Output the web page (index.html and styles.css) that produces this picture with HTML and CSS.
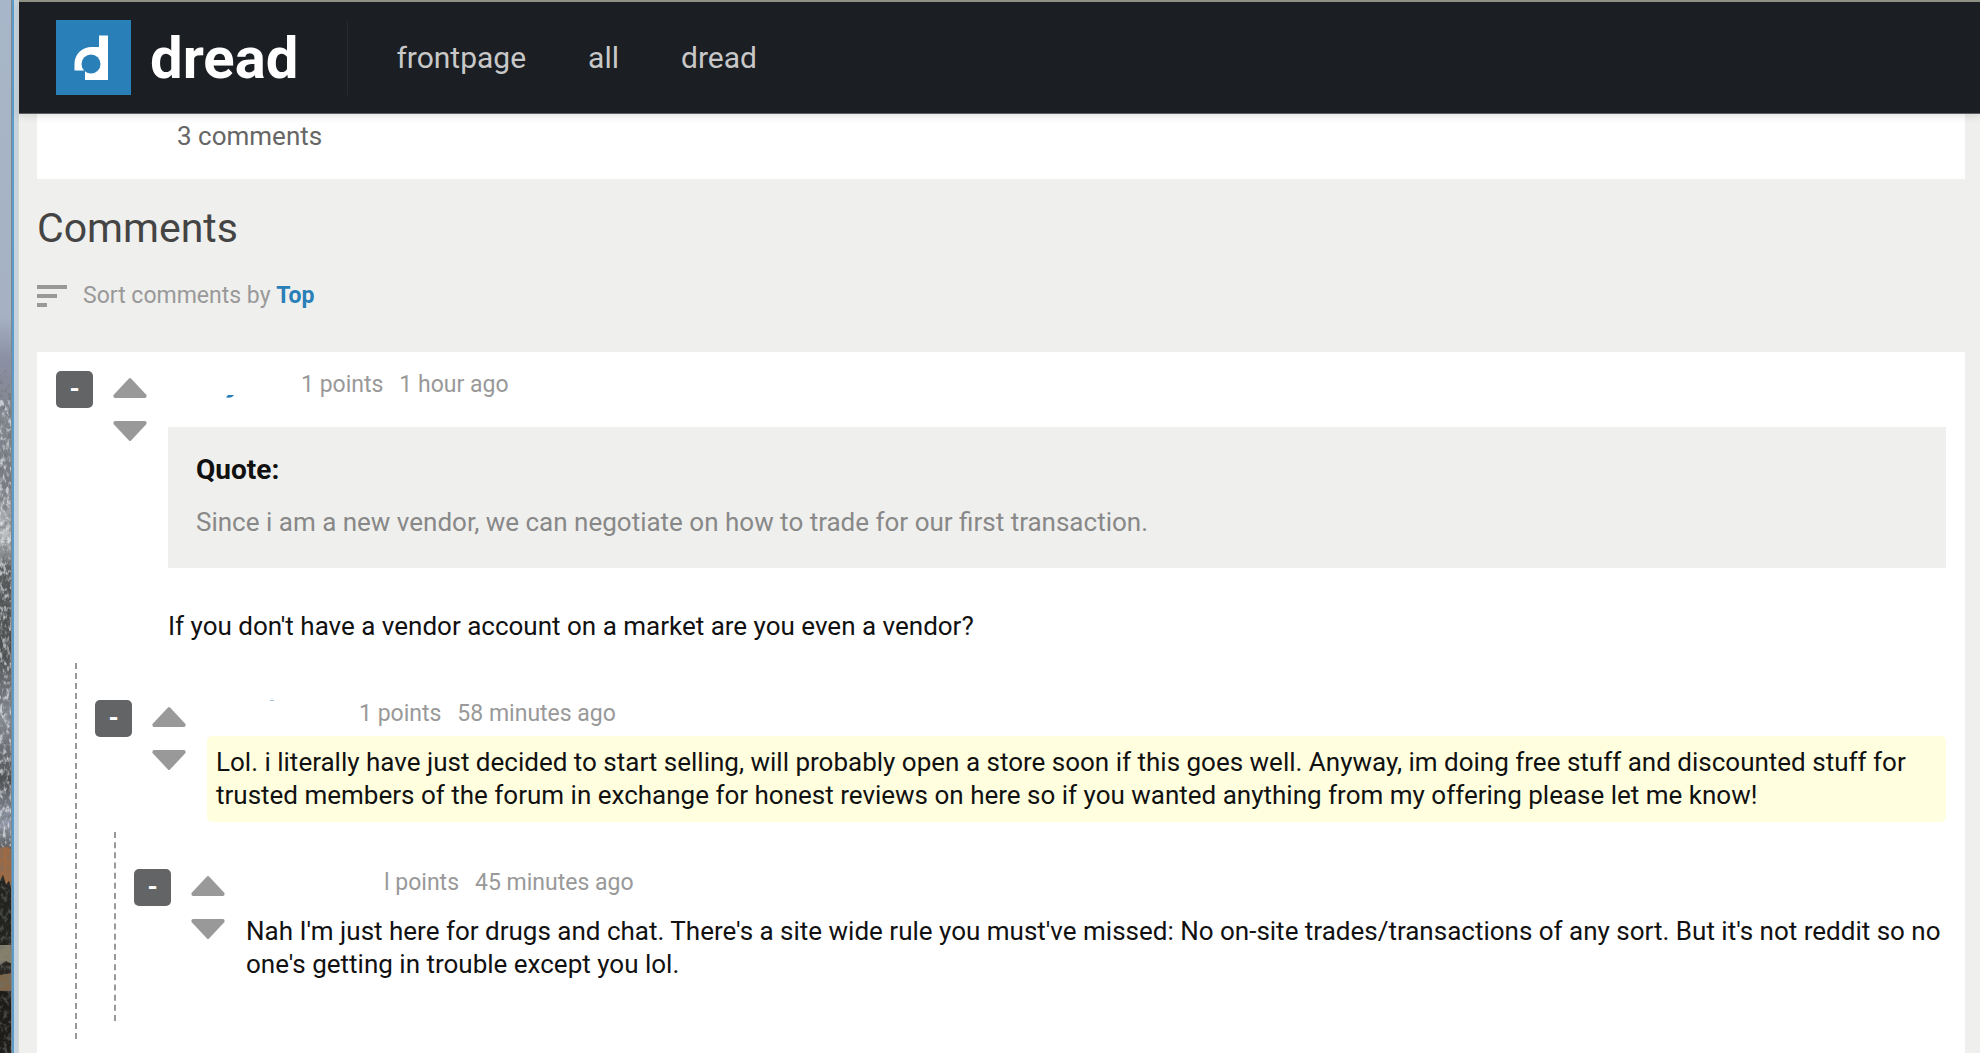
FILE: index.html
```html
<!DOCTYPE html>
<html lang="en">
<head>
<meta charset="utf-8">
<title>dread - comments</title>
<link rel="stylesheet" href="styles.css">
</head>
<body>
<div class="desktop">
  <svg class="wallpaper" viewBox="0 0 12 1053" preserveAspectRatio="none" aria-hidden="true">
    <defs>
      <linearGradient id="scene" x1="0" y1="0" x2="0" y2="1">
        <stop offset="0" stop-color="#a7b6c8"/>
        <stop offset=".3" stop-color="#a6b2c4"/>
        <stop offset=".34" stop-color="#8b90a4"/>
        <stop offset=".4" stop-color="#81868f"/>
        <stop offset=".46" stop-color="#7a7d84"/>
        <stop offset=".51" stop-color="#c0c4c6"/>
        <stop offset=".54" stop-color="#565a5b"/>
        <stop offset=".62" stop-color="#4b4e4e"/>
        <stop offset=".68" stop-color="#8a8e98"/>
        <stop offset=".74" stop-color="#4e5052"/>
        <stop offset=".78" stop-color="#949cac"/>
        <stop offset=".805" stop-color="#5d5e60"/>
      </linearGradient>
      <filter id="rock" x="0" y="0" width="1" height="1">
        <feTurbulence type="fractalNoise" baseFrequency=".3 .16" numOctaves="3" seed="7"/>
        <feColorMatrix values="0 0 0 0 .8  0 0 0 0 .82  0 0 0 0 .86  4 0 0 0 -1.9"/>
      </filter>
      <filter id="shade" x="0" y="0" width="1" height="1">
        <feTurbulence type="fractalNoise" baseFrequency=".25 .2" numOctaves="3" seed="21"/>
        <feColorMatrix values="0 0 0 0 .15  0 0 0 0 .16  0 0 0 0 .16  0 4 0 0 -1.9"/>
      </filter>
    </defs>
    <rect width="12" height="1053" fill="url(#scene)"/>
    <rect y="400" width="12" height="450" filter="url(#rock)" opacity=".7"/>
    <path d="M0 847L8 846L12 850V886L6 888L0 884Z" fill="#9c6a44"/>
    <path d="M0 880L3 874L6 884L9 880L12 890V946H0Z" fill="#22231f"/>
    <path d="M0 944H12V964L5 960L0 966Z" fill="#85806c"/>
    <path d="M0 964L6 960L12 963V978H0Z" fill="#292621"/>
    <path d="M0 974L12 972V990L0 992Z" fill="#7d674c"/>
    <rect y="990" width="12" height="63" fill="#1d1c19"/>
    <rect y="370" width="12" height="683" filter="url(#shade)" opacity=".5"/>
  </svg>
  <div class="window">
    <header class="topbar">
      <a class="brand" href="#">
        <svg class="brand-mark" viewBox="0 0 75 75" aria-hidden="true">
          <rect width="75" height="75" fill="#2980b9"/>
          <path d="M43 15.500H52V60H29V50.500H18.500V44C18.500 34 26 27 36 27H43Z" fill="#fff"/>
          <circle cx="35" cy="44" r="9.500" fill="#2980b9"/>
        </svg>
        <span class="brand-name">dread</span>
      </a>
      <nav class="nav">
        <a href="#">frontpage</a>
        <a href="#">all</a>
        <a href="#">dread</a>
      </nav>
    </header>
    <main class="page">
      <section class="card post-foot"><a href="#">3 comments</a></section>
      <h1 class="title">Comments</h1>
      <div class="sort">
        <svg class="sort-icon" viewBox="0 0 30 22" aria-hidden="true"><path d="M0 0H30V4H0ZM0 9H20V13H0ZM0 18H10V22H0Z" fill="#999"/></svg>
        <span>Sort comments by <a href="#">Top</a></span>
      </div>
      <section class="card thread">
        <article class="comment">
          <button class="toggle" type="button">-</button>
          <div class="votes">
            <button type="button" aria-label="Upvote"><svg viewBox="0 0 34 20"><path d="M16 .5Q17 -.5 18 .5L33.500 17Q34 20 32 20H2Q0 20 .5 17Z"/></svg></button>
            <button type="button" aria-label="Downvote"><svg viewBox="0 0 34 20"><path d="M16 19.500Q17 20.500 18 19.500L33.500 3Q34 0 32 0H2Q0 0 .5 3Z"/></svg></button>
          </div>
          <div class="body">
            <div class="meta">
              <span class="author author-first"><svg viewBox="0 0 8 4" class="trace"><path d="M2 1H8L6 3Q4 4 0 3.500Z" fill="#2980b9"/></svg></span>
              <span>1 points</span><span>1 hour ago</span>
            </div>
            <div class="text">
              <blockquote class="quote"><h2>Quote:</h2><p>Since i am a new vendor, we can negotiate on how to trade for our first transaction.</p></blockquote>
              <p>If you don't have a vendor account on a market are you even a vendor?</p>
            </div>
          </div>
        </article>
        <div class="replies">
          <article class="comment">
            <button class="toggle" type="button">-</button>
            <div class="votes">
              <button type="button" aria-label="Upvote"><svg viewBox="0 0 34 20"><path d="M16 .5Q17 -.5 18 .5L33.500 17Q34 20 32 20H2Q0 20 .5 17Z"/></svg></button>
              <button type="button" aria-label="Downvote"><svg viewBox="0 0 34 20"><path d="M16 19.500Q17 20.500 18 19.500L33.500 3Q34 0 32 0H2Q0 0 .5 3Z"/></svg></button>
            </div>
            <div class="body">
              <div class="meta">
                <span class="author author-second"><svg viewBox="0 0 8 4" class="trace"><path d="M2 1H6V2H2Z" fill="#a9c3d6"/></svg></span>
                <span>1 points</span><span>58 minutes ago</span>
              </div>
              <div class="text highlight">
                <p>Lol. i literally have just decided to start selling, will probably open a store soon if this goes well. Anyway, im doing free stuff and discounted stuff for trusted members of the forum in exchange for honest reviews on here so if you wanted anything from my offering please let me know!</p>
              </div>
            </div>
          </article>
          <div class="replies">
            <article class="comment">
              <button class="toggle" type="button">-</button>
              <div class="votes">
                <button type="button" aria-label="Upvote"><svg viewBox="0 0 34 20"><path d="M16 .5Q17 -.5 18 .5L33.500 17Q34 20 32 20H2Q0 20 .5 17Z"/></svg></button>
                <button type="button" aria-label="Downvote"><svg viewBox="0 0 34 20"><path d="M16 19.500Q17 20.500 18 19.500L33.500 3Q34 0 32 0H2Q0 0 .5 3Z"/></svg></button>
              </div>
              <div class="body">
                <div class="meta">
                  <span class="author author-third"></span>
                  <span>l points</span><span>45 minutes ago</span>
                </div>
                <div class="text">
                  <p>Nah I'm just here for drugs and chat. There's a site wide rule you must've missed: No on-site trades/transactions of any sort. But it's not reddit so no one's getting in trouble except you lol.</p>
                </div>
              </div>
            </article>
          </div>
        </div>
      </section>
    </main>
  </div>
</div>
</body>
</html>
```
FILE: styles.css
```css
* { box-sizing: border-box; margin: 0; padding: 0; }
body {
  font: 26px/33px Roboto, sans-serif;
  color: #111;
  background: #efefed;
}
a { color: inherit; text-decoration: none; }
button { border: 0; font: inherit; cursor: pointer; }
svg { display: block; }

.desktop { display: flex; min-height: 100vh; }
.wallpaper { flex: none; width: 12px; height: auto; }
.window {
  flex: 1;
  min-width: 0;
  display: flex;
  flex-direction: column;
  border-left: 2px solid #5a9dc8;
  box-shadow: -1px 0 #80868f, inset 4px 0 #c4d3de, inset 5px 0 #d8d4d0;
  padding-left: 5px;
}

.topbar {
  display: flex;
  align-items: center;
  height: 114px;
  padding-left: 37px;
  background: #1b1e23;
  border-top: 2px solid #8f9184;
  border-bottom: 1px solid #5c5d62;
  box-shadow: 0 2px 8px rgba(0, 0, 0, .12);
  position: relative;
}
.brand { display: flex; align-items: center; color: #fff; }
.brand-mark { width: 75px; height: 75px; margin-right: 19px; }
.brand-name { font-size: 58px; line-height: 72px; font-weight: 700; }
.nav {
  display: flex;
  gap: 62px;
  margin-left: 49px;
  padding-left: 48px;
  border-left: 1px solid #272b2b;
  font-size: 30px;
  line-height: 74px;
  color: #c8c8c8;
}

.page { flex: 1; display: flex; flex-direction: column; padding: 0 15px 0 18px; }
.card { background: #fff; }
.post-foot { padding: 6px 140px 26px; color: #666; }
.title { margin-top: 25px; font-size: 41px; line-height: 48px; font-weight: 400; color: #444; }
.sort {
  display: flex;
  align-items: center;
  gap: 16px;
  margin: 27px 0 39px;
  font-size: 23px;
  line-height: 34px;
  color: #999;
}
.sort-icon { width: 30px; height: 22px; }
.sort a { color: #2980b9; font-weight: 700; }

.thread { flex: 1; padding: 15px 19px; }
.comment { display: flex; }
.toggle {
  flex: none;
  width: 37px;
  height: 37px;
  margin: 4px 20px 0 0;
  border-radius: 5px;
  background: #636466;
  color: #fff;
  font-weight: 700;
}
.votes { flex: none; display: grid; gap: 23px; align-content: start; width: 34px; margin: 11px 21px 0 0; }
.votes button { background: none; line-height: 0; }
.votes svg { width: 34px; height: 20px; fill: #999; }
.body { flex: 1; min-width: 0; }
.meta { display: flex; gap: 16px; font-size: 23px; line-height: 36px; margin-bottom: 4px; color: #999; }
.author { display: flex; align-items: end; margin-right: -16px; }
.author-first { width: 133px; padding: 0 0 5px 58px; }
.author-second { width: 152px; padding: 3px 0 0 61px; align-items: start; }
.author-third { width: 138px; }
.trace { width: 8px; height: 4px; }
.text { padding: 10px 0; }
.highlight { padding: 10px 9px; border-radius: 5px; background: #ffffdf; }
.quote { margin: 10px 0 42px; padding: 26px 28px 29px; background: #efefed; color: #888; }
.quote h2 { margin-bottom: 20px; font-size: 28px; line-height: 33px; font-weight: 700; color: #111; }

.replies { margin: 10px 0 0 19px; padding: 33px 0 30px 18px; border-left: 2px dashed #999; }
.replies .replies { margin-bottom: -12px; }
```
